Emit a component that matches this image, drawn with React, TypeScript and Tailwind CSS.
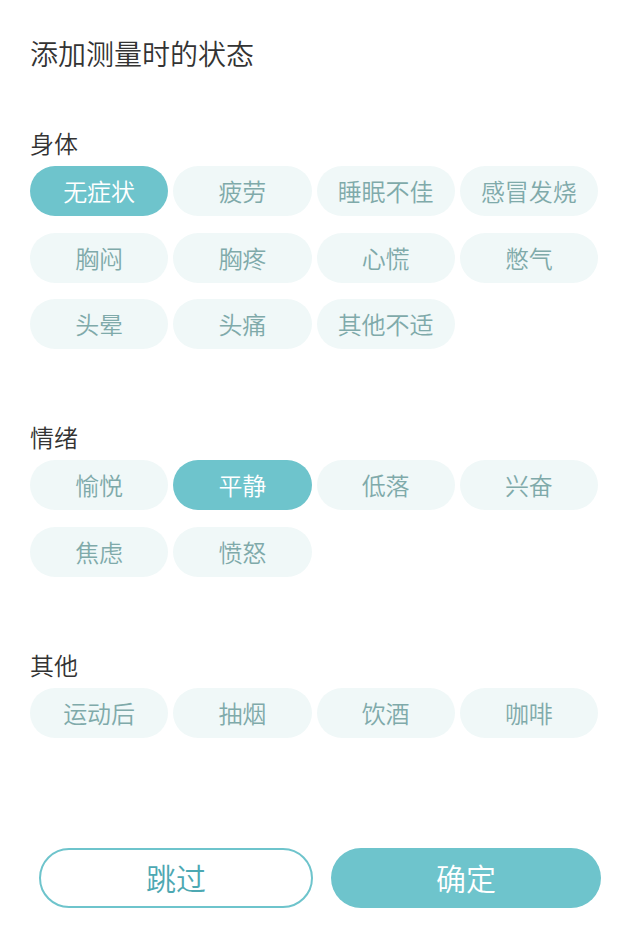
import { useState } from "react";

type Section = {
  title: string;
  options: string[];
};

const sections: Section[] = [
  {
    title: "身体",
    options: ["无症状", "疲劳", "睡眠不佳", "感冒发烧", "胸闷", "胸疼", "心慌", "憋气", "头晕", "头痛", "其他不适"],
  },
  {
    title: "情绪",
    options: ["愉悦", "平静", "低落", "兴奋", "焦虑", "愤怒"],
  },
  {
    title: "其他",
    options: ["运动后", "抽烟", "饮酒", "咖啡"],
  },
];

const font = { fontFamily: '"Noto Sans CJK SC", "Noto Sans", sans-serif' };

export default function App() {
  const [selected, setSelected] = useState<Record<string, string[]>>({
    身体: ["无症状"],
    情绪: ["平静"],
    其他: [],
  });

  const toggle = (section: string, option: string) => {
    setSelected((prev) => {
      const current = prev[section] ?? [];
      const next = current.includes(option)
        ? current.filter((o) => o !== option)
        : [...current, option];
      return { ...prev, [section]: next };
    });
  };

  return (
    <div className="min-h-[946px] w-[640px] bg-white" style={font}>
      <h1 className="pl-[30px] pt-[33px] text-[28px] leading-[40px] font-[350] text-[#333333]">
        添加测量时的状态
      </h1>

      <div className="mt-[54px] flex flex-col gap-[72px]">
        {sections.map((section) => (
          <div key={section.title} className="pl-[30px]">
            <h2 className="text-[24px] leading-[32px] font-[350] text-[#333333]">
              {section.title}
            </h2>

            <div className="mt-[7px] grid w-[568px] grid-cols-4 gap-x-[5px] gap-y-[16.5px]">
              {section.options.map((option) => {
                const active = selected[section.title]?.includes(option);
                return (
                  <button
                    key={option}
                    onClick={() => toggle(section.title, option)}
                    className={
                      active
                        ? "h-[50px] rounded-full bg-[#6ec4cc] text-[24px] font-[350] text-white"
                        : "h-[50px] rounded-full bg-[#f0f8f8] text-[24px] font-[350] text-[#7faaaa]"
                    }
                  >
                    {option}
                  </button>
                );
              })}
            </div>
          </div>
        ))}
      </div>

      <div className="mt-[110px] flex gap-[18px] px-[39px]">
        <button className="h-[60px] flex-1 rounded-full border-2 border-[#6ec4cc] bg-white text-[30px] font-[350] text-[#4da8b2]">
          跳过
        </button>
        <button className="h-[60px] flex-1 rounded-full bg-[#6ec4cc] text-[30px] font-[350] text-white">
          确定
        </button>
      </div>
    </div>
  );
}
